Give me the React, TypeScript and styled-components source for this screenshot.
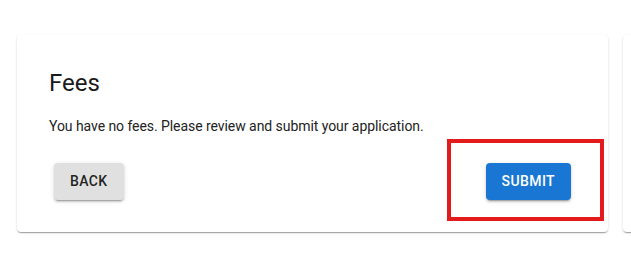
import React from "react";
import styled, { createGlobalStyle } from "styled-components";

const Global = createGlobalStyle`
  html, body { margin: 0; padding: 0; background: #ffffff; }
  body { font-family: Roboto, "Liberation Sans", Arial, sans-serif; overflow: hidden; }
`;

const Page = styled.div`
  display: flex;
  gap: 15px;
  padding: 35px 0 0 17px;
  width: 631px;
  height: 254px;
  box-sizing: border-box;
  overflow: hidden;
`;

const Card = styled.section<{ $width: number }>`
  position: relative;
  flex: 0 0 ${(p) => p.$width}px;
  box-sizing: border-box;
  height: 197px;
  background: #fff;
  border-radius: 4px;
  box-shadow: 0px 2px 1px -1px rgba(0, 0, 0, 0.2), 0px 1px 1px 0px rgba(0, 0, 0, 0.14),
    0px 1px 3px 0px rgba(0, 0, 0, 0.12);
  padding: 32px;
`;

const Title = styled.h2`
  margin: 0 0 17px;
  font-size: 24px;
  line-height: 32px;
  font-weight: 400;
  color: #1a1a1a;
`;

const Body = styled.p`
  margin: 0;
  font-size: 14px;
  line-height: 20px;
  letter-spacing: -0.06px;
  color: #222;
`;

const Actions = styled.div`
  display: flex;
  justify-content: space-between;
  margin-top: 27px;
  padding: 0 5px;
`;

const Button = styled.button<{ $primary?: boolean }>`
  font-family: Roboto, "Liberation Sans", Arial, sans-serif;
  font-size: 14px;
  font-weight: 500;
  letter-spacing: 0.4px;
  line-height: 24.5px;
  text-transform: uppercase;
  padding: 6px 16px;
  border: 0;
  border-radius: 4px;
  min-width: 64px;
  background: ${(p) => (p.$primary ? "#1976d2" : "#e0e0e0")};
  color: ${(p) => (p.$primary ? "#fff" : "rgba(0,0,0,0.87)")};
  box-shadow: 0px 3px 1px -2px rgba(0, 0, 0, 0.2), 0px 2px 2px 0px rgba(0, 0, 0, 0.14),
    0px 1px 5px 0px rgba(0, 0, 0, 0.12);
  cursor: pointer;
`;

const Highlight = styled.div`
  position: absolute;
  left: 430px;
  top: 104px;
  width: 157px;
  height: 82px;
  box-sizing: border-box;
  border: 4px solid #e31b1b;
  pointer-events: none;
`;

export default function App() {
  return (
    <>
      <Global />
      <Page>
        <Card $width={591}>
          <Title>Fees</Title>
          <Body>You have no fees. Please review and submit your application.</Body>
          <Actions>
            <Button>Back</Button>
            <Button $primary>Submit</Button>
          </Actions>
          <Highlight />
        </Card>
        <Card $width={300} />
      </Page>
    </>
  );
}
